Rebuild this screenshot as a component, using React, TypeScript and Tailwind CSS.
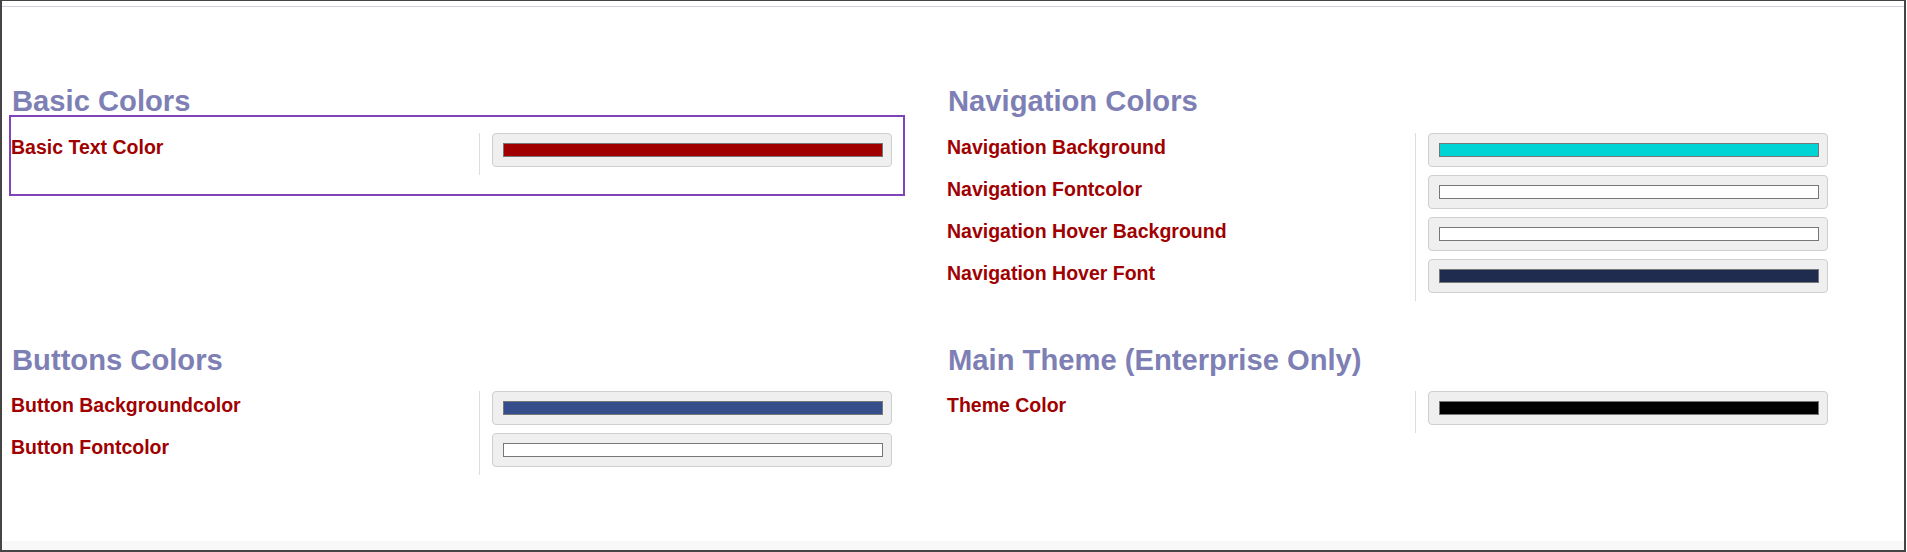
import React from 'react';

type Field = { label: string; color: string };

type Section = {
  title: string;
  fields: Field[];
  active?: boolean;
  pt: string;
};

const top: Section[] = [
  {
    title: 'Basic Colors',
    active: true,
    pt: 'pt-[16px]',
    fields: [{ label: 'Basic Text Color', color: '#a00000' }],
  },
  {
    title: 'Navigation Colors',
    pt: 'pt-[16px]',
    fields: [
      { label: 'Navigation Background', color: '#00d4d4' },
      { label: 'Navigation Fontcolor', color: '#ffffff' },
      { label: 'Navigation Hover Background', color: '#ffffff' },
      { label: 'Navigation Hover Font', color: '#1f2b4f' },
    ],
  },
];

const bottom: Section[] = [
  {
    title: 'Buttons Colors',
    pt: 'pt-[15px]',
    fields: [
      { label: 'Button Backgroundcolor', color: '#354e8b' },
      { label: 'Button Fontcolor', color: '#ffffff' },
    ],
  },
  {
    title: 'Main Theme (Enterprise Only)',
    pt: 'pt-[15px]',
    fields: [{ label: 'Theme Color', color: '#000000' }],
  },
];

const ColorSection: React.FC<{ section: Section }> = ({ section }) => {
  return (
    <div className="flex flex-col">
      <h2 className="text-[29.2px] leading-[28px] font-bold text-[#7e7fb4] pl-[3px]">{section.title}</h2>
      <div
        className={`flex border-2 pb-[19px] ${section.pt} ${
          section.active ? 'border-[#7f44b8]' : 'border-transparent'
        }`}
      >
        <div className="w-[468px] flex flex-col">
          {section.fields.map((f) => (
            <div key={f.label} className="h-[42px] pt-[3px] text-[19.5px] leading-[22px] font-bold text-[#a00000]">
              {f.label}
            </div>
          ))}
        </div>
        <div className="border-l border-[#dddddd] pl-[12px] flex flex-col">
          {section.fields.map((f) => (
            <div
              key={f.label}
              className="w-[400px] h-[34px] mb-[8px] flex items-center pl-[10px] bg-[#efefef] border border-[#cfcfcf] rounded-[4px]"
            >
              <div className="w-[380px] h-[14px] border border-[#777777]" style={{ backgroundColor: f.color }} />
            </div>
          ))}
        </div>
      </div>
    </div>
  );
};

export default function App() {
  return (
    <div
      className="w-[1906px] h-[552px] bg-white border-l-2 border-t border-r-2 border-b-2 border-[#454545] flex flex-col"
      style={{ fontFamily: '"Liberation Sans", Arial, sans-serif' }}
    >
      <div className="h-[5px]" />
      <div className="h-px bg-[#cfd4da]" />
      <div className="flex-1 pl-[7px] pt-[80px]">
        <div className="grid grid-cols-[896px_896px] gap-x-[40px] items-start">
          {top.map((s) => (
            <ColorSection key={s.title} section={s} />
          ))}
        </div>
        <div className="grid grid-cols-[896px_896px] gap-x-[40px] items-start mt-[24px]">
          {bottom.map((s) => (
            <ColorSection key={s.title} section={s} />
          ))}
        </div>
      </div>
      <div className="h-[9px] bg-[#f8f8f8]" />
    </div>
  );
}
